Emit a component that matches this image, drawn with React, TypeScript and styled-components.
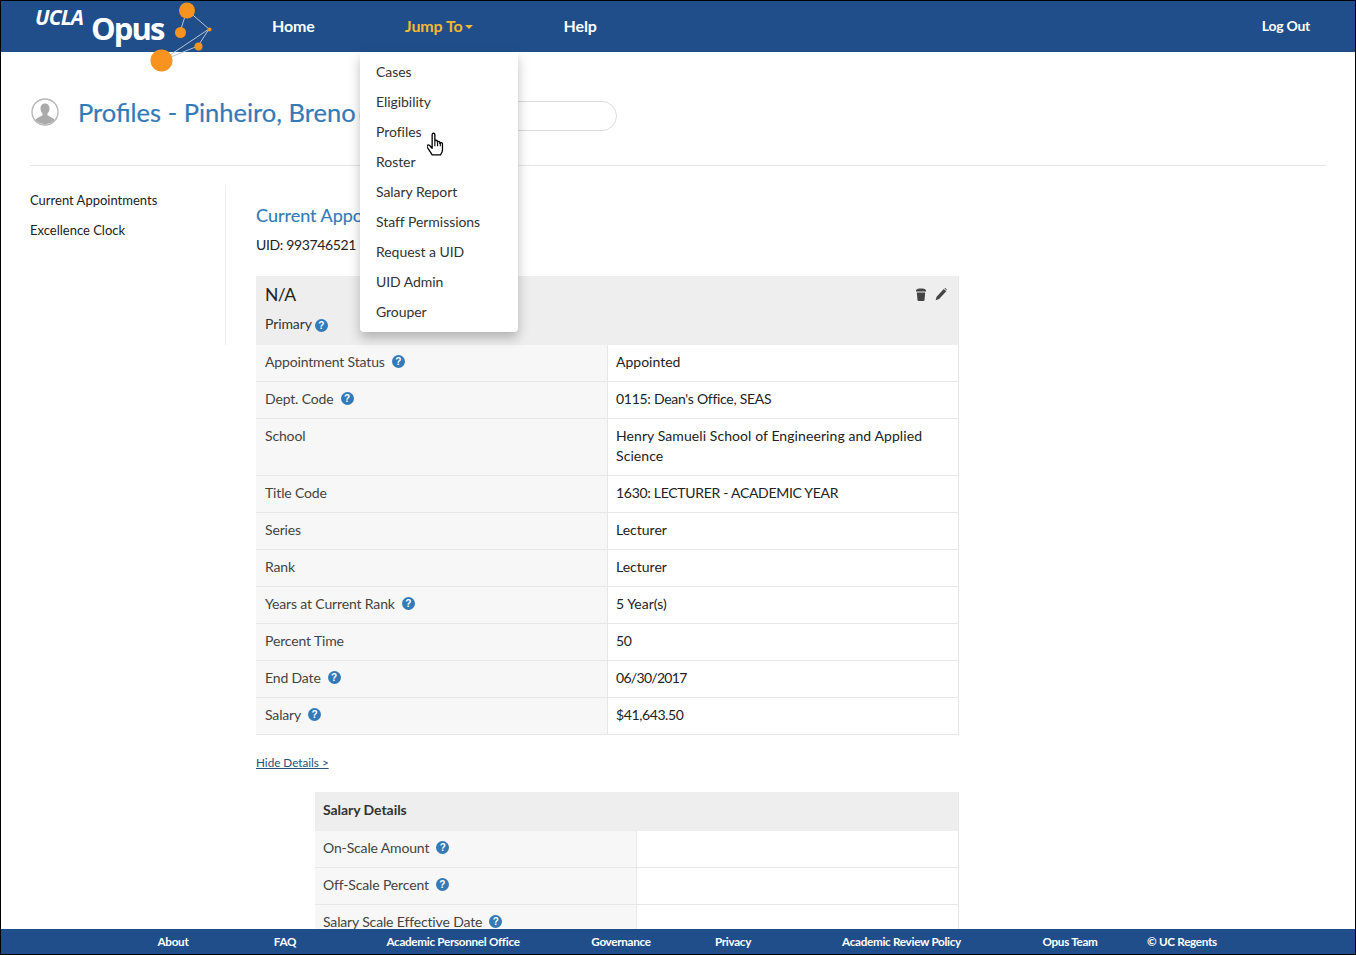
import React from "react";
import styled, { createGlobalStyle } from "styled-components";

const Global = createGlobalStyle`
  html, body { margin: 0; padding: 0; background: #fff; }
  body { font-family: Lato, "Liberation Sans", sans-serif; color: #333; font-size: 14px; }
  * { box-sizing: border-box; }
`;

const Frame = styled.div`
  width: 1356px; height: 955px; border: 1px solid #000; display: flex; flex-direction: column;
  position: relative; overflow: hidden; background: #fff;
`;
const Header = styled.header`
  height: 51px; flex: none; background: #1f4e8a; display: flex; align-items: center;
  padding: 0 45px 2px 271px; gap: 90px; position: relative; z-index: 2;
`;
const NavLink = styled.a<{ $active?: boolean }>`
  color: ${(p) => (p.$active ? "#f5b82e" : "#fff")}; font-size: 16px; font-weight: 700;
  display: flex; align-items: center; letter-spacing: -0.1px;
`;
const Caret = styled.span`
  width: 0; height: 0; margin: 2px 1px 0 2px;
  border-left: 4px solid transparent; border-right: 4px solid transparent; border-top: 4px solid #f5b82e;
`;
const LogOut = styled.a`
  color: #fff; font-size: 14px; font-weight: 700; margin-left: auto; letter-spacing: -0.25px;
`;
const Logo = styled.div`
  position: absolute; left: 0; top: 0; width: 220px; height: 76px;
`;
const LogoArt = styled.svg`
  position: absolute; left: 0; top: 0;
`;
const Ucla = styled.span`
  position: absolute; left: 34px; top: 4px; color: #fff; font: italic 700 21px/24px "Open Sans", sans-serif; letter-spacing: -0.8px;
`;
const Opus = styled.span`
  position: absolute; left: 90px; top: 8px; color: #fff; font: 700 31px/38px "Open Sans", sans-serif; letter-spacing: -1.9px;
`;
const Menu = styled.ul`
  position: absolute; left: 359px; top: 51px; width: 158px; height: 280px; margin: 0; padding: 5px 0;
  list-style: none; background: #fff; border-radius: 0 0 4px 4px; box-shadow: 0 6px 12px rgba(0,0,0,.25); z-index: 3;
`;
const MenuItem = styled.li`
  height: 30px; line-height: 30px; padding-left: 16px; font-size: 14px; color: #333; letter-spacing: -0.05px;
`;
const Hand = styled.svg`
  position: absolute; left: 426px; top: 131px; z-index: 4;
`;
const Main = styled.main`
  flex: 1; min-height: 0; overflow: hidden; padding: 0 29px;
`;
const TitleRow = styled.div`
  height: 114px; border-bottom: 1px solid #e5e5e5; display: flex; align-items: center; padding-top: 7px;
`;
const Avatar = styled.svg`
  flex: none; margin-left: 1px; margin-right: 19px;
`;
const Title = styled.h1`
  margin: 0; font-size: 25.500px; font-weight: 400; color: #337ab7; width: 281px; white-space: nowrap; -webkit-text-stroke: .2px #337ab7;
`;
const Search = styled.div`
  width: 258px; height: 30px; border: 1px solid #ddd; border-radius: 15px; margin-top: 8px;
`;
const Body = styled.div`
  display: flex; padding-top: 19px;
`;
const Side = styled.nav`
  width: 196px; height: 160px; border-right: 1px solid #eee; flex: none; display: flex; flex-direction: column;
`;
const SideLink = styled.a`
  height: 30px; line-height: 30px; font-size: 13px; color: #222;
`;
const Content = styled.div`
  margin-left: 30px; width: 703px; flex: none;
`;
const Heading = styled.h2`
  margin: 18px 0 0; font-size: 18px; line-height: 24px; font-weight: 400; color: #337ab7; -webkit-text-stroke: .15px #337ab7;
`;
const Uid = styled.div`
  margin-top: 8px; height: 22px; line-height: 20px; font-size: 14px; color: #222; letter-spacing: -0.35px;
`;
const Card = styled.section`
  margin-top: 19px; border-bottom: 1px solid #e7e7e7; border-right: 1px solid #e7e7e7;
`;
const CardHead = styled.div`
  height: 69px; background: #eee; padding: 8px 9px; position: relative;
`;
const CardTitle = styled.div`
  font-size: 17.500px; line-height: 22px; color: #222; letter-spacing: -0.5px;
`;
const Primary = styled.div`
  margin-top: 8px; font-size: 14px; line-height: 20px; display: flex; align-items: center; gap: 3px; letter-spacing: -0.1px;
`;
const CardActions = styled.div`
  position: absolute; right: 11px; top: 12px; display: flex; gap: 8px; align-items: center;
`;
const Row = styled.div<{ $tall?: boolean; $split?: number }>`
  display: grid; grid-template-columns: ${(p) => p.$split ?? 352}px 1fr; min-height: ${(p) => (p.$tall ? 57 : 37)}px;
  border-bottom: 1px solid #e7e7e7;
  &:last-child { border-bottom: 0; min-height: 36px; }
`;
const Label = styled.div`
  background: #f7f7f7; padding: 7px 8px 0 9px; font-size: 14px; line-height: 20px; color: #444; display: flex; align-items: flex-start; gap: 7px;
  border-right: 1px solid #e7e7e7; letter-spacing: -0.15px;
`;
const Value = styled.div<{ $track?: number }>`
  padding: 7px 30px 0 8px; font-size: 14px; line-height: 20px; color: #222; letter-spacing: ${(p) => p.$track ?? 0}px;
`;
const Help = styled.span`
  width: 13px; height: 13px; margin-top: 3px; border-radius: 50%; background: #337ab7; color: #fff; font: 700 10px/13px "Liberation Sans", sans-serif;
  text-align: center; flex: none; letter-spacing: 0;
`;
const Toggle = styled.a`
  display: block; margin-top: 18px; font-size: 11.700px; line-height: 18px; color: #23527c; text-decoration: underline;
`;
const SubCard = styled.section`
  margin: 21px 0 0 59px; border-right: 1px solid #e7e7e7;
  ${Label} { padding-left: 8px; }
`;
const SubHead = styled.div`
  height: 39px; line-height: 36px; background: #eee; padding-left: 8px; font-size: 14px; font-weight: 700; color: #333; letter-spacing: -0.05px;
`;
const Footer = styled.footer`
  height: 25px; flex: none; background: #1f4e8a; display: grid; padding: 0 0 2px 116px;
  grid-template-columns: 112px 112px 224px 112px 112px 225px 112px 112px; align-items: center;
`;
const FootLink = styled.a`
  color: #fff; font-size: 11.700px; font-weight: 700; text-align: center; white-space: nowrap; letter-spacing: -0.3px;
`;

const rows: { l: string; v: string; h?: boolean; t?: boolean; k?: number }[] = [
  { l: "Appointment Status", v: "Appointed", h: true },
  { l: "Dept. Code", v: "0115: Dean's Office, SEAS", h: true, k: -0.28 },
  { l: "School", v: "Henry Samueli School of Engineering and Applied Science", t: true, k: 0.08 },
  { l: "Title Code", v: "1630: LECTURER - ACADEMIC YEAR", k: -0.3 },
  { l: "Series", v: "Lecturer" },
  { l: "Rank", v: "Lecturer" },
  { l: "Years at Current Rank", v: "5 Year(s)", h: true },
  { l: "Percent Time", v: "50", k: -0.3 },
  { l: "End Date", v: "06/30/2017", h: true, k: -0.7 },
  { l: "Salary", v: "$41,643.50", h: true, k: -0.4 },
];
const menu = ["Cases", "Eligibility", "Profiles", "Roster", "Salary Report", "Staff Permissions", "Request a UID", "UID Admin", "Grouper"];
const foot = ["About", "FAQ", "Academic Personnel Office", "Governance", "Privacy", "Academic Review Policy", "Opus Team", "© UC Regents"];

export default function App() {
  return (
    <Frame>
      <Global />
      <Header>
        <Logo>
          <Ucla>UCLA</Ucla>
          <Opus>Opus</Opus>
          <LogoArt width="220" height="76" viewBox="0 0 220 76">
            <g stroke="#b9c4d4" strokeWidth="1" fill="none">
              <path d="M186 9L208 28L197 45L160 60M186 9L179 31M208 28L160 60" />
            </g>
            <g fill="#f7931e">
              <circle cx="186" cy="9.5" r="8" />
              <circle cx="179.500" cy="31.500" r="5.500" />
              <circle cx="208.500" cy="28.500" r="2" />
              <circle cx="197.500" cy="45.500" r="4" />
              <circle cx="160.500" cy="59.500" r="11" />
            </g>
          </LogoArt>
        </Logo>
        <NavLink>Home</NavLink>
        <NavLink $active>Jump To<Caret /></NavLink>
        <NavLink>Help</NavLink>
        <LogOut>Log Out</LogOut>
      </Header>
      <Menu>
        {menu.map((m) => <MenuItem key={m}>{m}</MenuItem>)}
      </Menu>
      <Hand width="19" height="25" viewBox="0 0 17 23">
        <path d="M4.500 2.500c0-1.800 2.500-1.800 2.500 0v6c0-1.200 2.300-1.200 2.300 0v1c0-1.200 2.300-1.200 2.300.2v.8c0-1.200 2.400-1 2.400.4v5.600c0 2-.8 3-1.800 4.500h-7.700c-1.500-2.500-3.300-5-4.500-7-.9-1.600 1-2.800 2.100-1.600l2.400 2.600z" fill="#fff" stroke="#000" strokeWidth="1.200" strokeLinejoin="round" />
        <path d="M7 9v4M9.500 9.500v3.500M12 10v3" stroke="#000" strokeWidth="1" />
      </Hand>
      <Main>
        <TitleRow>
          <Avatar width="28" height="28" viewBox="0 0 28 28">
            <circle cx="14" cy="14" r="13" fill="#fff" stroke="#b5b5b5" strokeWidth="1.300" />
            <path d="M14 5.500c3 0 4.500 2.300 4.500 5 0 2-.8 3.800-2 5v1.800l5.800 3.200c.8.500 1.200 1 1.200 1.500a13 13 0 0 1-19 0c0-.5.400-1 1.200-1.500l5.800-3.200v-1.800c-1.200-1.200-2-3-2-5 0-2.700 1.500-5 4.500-5z" fill="#aaa" />
          </Avatar>
          <Title>Profiles - Pinheiro, Breno</Title>
          <Search />
        </TitleRow>
        <Body>
          <Side>
            <SideLink>Current Appointments</SideLink>
            <SideLink>Excellence Clock</SideLink>
          </Side>
          <Content>
            <Heading>Current Appointments</Heading>
            <Uid>UID: 993746521</Uid>
            <Card>
              <CardHead>
                <CardTitle>N/A</CardTitle>
                <Primary>Primary <Help>?</Help></Primary>
                <CardActions>
                  <svg width="12" height="13" viewBox="0 0 12 13">
                    <path d="M1 2.200C2 .8 4 .5 6 .5s4 .3 5 1.700v1.300H1zM1.800 4.500h8.400L9.500 12c-.1.600-.4 1-1 1h-5c-.6 0-.9-.4-1-1z" fill="#444" />
                  </svg>
                  <svg width="12" height="13" viewBox="0 0 12 13">
                    <path d="M8.800 1l2.500 2.300-7.200 7.700-3.500 1.300 1-3.600zM9.500.3c.4-.3.800-.3 1.100 0l1.100 1.100c.3.300.3.700 0 1z" fill="#444" />
                  </svg>
                </CardActions>
              </CardHead>
              {rows.map(({ l, v, h, t, k }) => (
                <Row key={l} $tall={t}>
                  <Label>{l}{h && <Help>?</Help>}</Label>
                  <Value $track={k}>{v}</Value>
                </Row>
              ))}
            </Card>
            <Toggle>Hide Details &gt;</Toggle>
            <SubCard>
              <SubHead>Salary Details</SubHead>
              {["On-Scale Amount", "Off-Scale Percent", "Salary Scale Effective Date"].map((l) => (
                <Row key={l} $split={322}>
                  <Label>{l}<Help>?</Help></Label>
                  <Value />
                </Row>
              ))}
            </SubCard>
          </Content>
        </Body>
      </Main>
      <Footer>
        {foot.map((f) => <FootLink key={f}>{f}</FootLink>)}
      </Footer>
    </Frame>
  );
}
